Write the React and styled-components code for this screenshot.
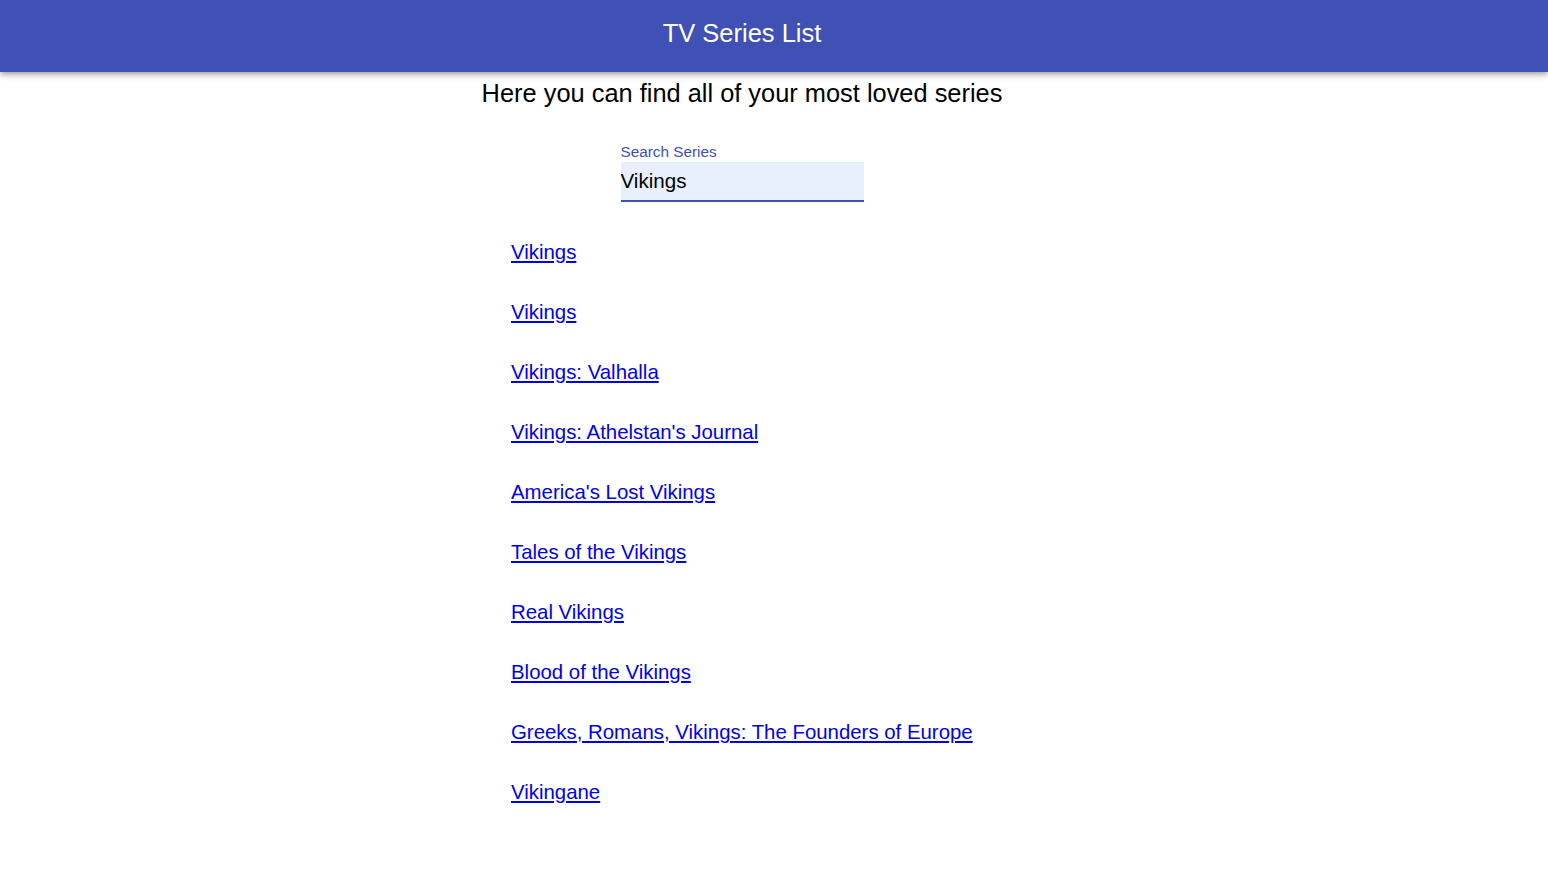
import React, { useState } from "react";
import styled, { createGlobalStyle } from "styled-components";

const Global = createGlobalStyle`
  html, body { margin: 0; padding: 0; background: #fff; }
  body { font-family: "Liberation Sans", Arial, sans-serif; }
`;

const Header = styled.header`
  height: 72px;
  background: #3f51b5;
  display: flex;
  align-items: center;
  justify-content: center;
  padding-right: 64px;
  box-shadow: 0 2px 4px -1px rgba(0,0,0,0.2), 0 4px 5px 0 rgba(0,0,0,0.14), 0 1px 10px 0 rgba(0,0,0,0.12);
  position: relative;
  z-index: 1;
`;

const Title = styled.h1`
  margin: -6px 0 0;
  color: #fff;
  font-size: 25.5px;
  font-weight: 400;
  line-height: 32px;
`;

const Main = styled.main`
  display: flex;
  flex-direction: column;
  align-items: center;
  padding-right: 64px;
`;

const Subtitle = styled.h2`
  margin: 7px 0 0;
  font-size: 25.4px;
  font-weight: 400;
  line-height: 28px;
  color: #000;
`;

const Field = styled.div`
  margin-top: 36px;
  width: 243px;
  display: flex;
  flex-direction: column;
`;

const Label = styled.label`
  font-size: 15.3px;
  line-height: 17px;
  color: #3f51b5;
  margin-bottom: 2px;
`;

const Input = styled.input`
  box-sizing: border-box;
  height: 40px;
  border: none;
  border-bottom: 2px solid #3f51b5;
  background: #e8f0fe;
  font-family: "Liberation Sans", Arial, sans-serif;
  font-size: 20.6px;
  color: #000;
  padding: 0;
  outline: none;
  caret-color: #000;
`;

const List = styled.ul`
  list-style: none;
  width: 542px;
  box-sizing: border-box;
  margin: 38px 0 0;
  padding: 0 0 0 40px;
  display: flex;
  flex-direction: column;
  gap: 36px;
`;

const Item = styled.li`
  font-size: 20.4px;
  line-height: 24px;
`;

const Link = styled.a`
  color: #0000ee;
  text-decoration: underline;
`;

const shows = [
  "Vikings",
  "Vikings",
  "Vikings: Valhalla",
  "Vikings: Athelstan's Journal",
  "America's Lost Vikings",
  "Tales of the Vikings",
  "Real Vikings",
  "Blood of the Vikings",
  "Greeks, Romans, Vikings: The Founders of Europe",
  "Vikingane",
];

export default function App() {
  const [q, setQ] = useState("Vikings");
  return (
    <>
      <Global />
      <Header>
        <Title>TV Series List</Title>
      </Header>
      <Main>
        <Subtitle>Here you can find all of your most loved series</Subtitle>
        <Field>
          <Label htmlFor="search">Search Series</Label>
          <Input id="search" value={q} onChange={(e) => setQ(e.target.value)} autoFocus />
        </Field>
        <List>
          {shows.map((s, i) => (
            <Item key={i}>
              <Link href="#">{s}</Link>
            </Item>
          ))}
        </List>
      </Main>
    </>
  );
}
